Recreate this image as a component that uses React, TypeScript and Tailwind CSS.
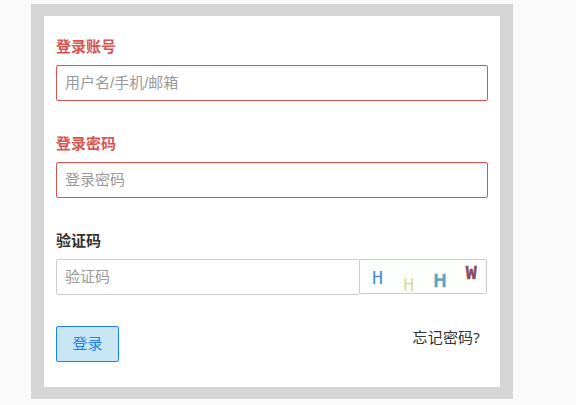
const fontStack = "font-['Noto_Sans','Noto_Sans_CJK_SC',sans-serif]";
const inputFont = "font-['Liberation_Sans','Noto_Sans_CJK_SC',sans-serif]";

interface FieldProps {
  id: string;
  label: string;
  placeholder: string;
  type?: string;
}

function ErrorField({ id, label, placeholder, type = 'text' }: FieldProps) {
  return (
    <div className="mb-[30px]">
      <label htmlFor={id} className="mb-[7px] block h-6 text-[15px] leading-6 font-bold text-[#d9534f]">
        {label}
      </label>
      <input
        id={id}
        type={type}
        placeholder={placeholder}
        className={`block h-9 w-full rounded-xs border border-[#d9534f] bg-white px-2 pb-px text-[15px] shadow-[inset_0_1px_1px_rgba(0,0,0,0.05)] outline-none placeholder:text-[#999] ${inputFont}`}
      />
    </div>
  );
}

function Captcha() {
  return (
    <div className="-ml-px h-[35px] w-32 rounded-xs border border-[#ccc] bg-[#fcfefc]">
      <svg width="126" height="33" viewBox="360 260 126 33" fontFamily="'DejaVu Sans Mono', monospace">
        <text x="372" y="284" fontSize="17.5" textLength="11" lengthAdjust="spacingAndGlyphs" fill="#4590d8">H</text>
        <text x="403.3" y="290.5" fontSize="17.5" textLength="11" lengthAdjust="spacingAndGlyphs" fill="#cfe09c">H</text>
        <text x="433.5" y="286.7" fontSize="17.5" stroke="#58a5c0" strokeWidth="0.6" textLength="13" lengthAdjust="spacingAndGlyphs" fill="#58a5c0">H</text>
        <text x="465.8" y="279" fontSize="17" fontWeight="bold" stroke="#8a4a5c" strokeWidth="0.4" textLength="11" lengthAdjust="spacingAndGlyphs" fill="#8a4a5c">W</text>
      </svg>
    </div>
  );
}

export default function App() {
  return (
    <div className={`h-[405px] w-[576px] bg-[#fafafa] pt-1 pl-[31px] ${fontStack}`}>
      <div className="h-[395px] w-[482px] border-x-[13px] border-y-12 border-[#d5d5d5] bg-white px-3 pt-[18px]">
        <form>
          <ErrorField id="account" label="登录账号" placeholder="用户名/手机/邮箱" />
          <ErrorField id="password" label="登录密码" placeholder="登录密码" />

          {/* Verification code */}
          <label htmlFor="code" className="mb-[7px] block h-6 text-[15px] leading-6 font-bold text-[#333]">
            验证码
          </label>
          <div className="flex items-start">
            <input
              id="code"
              type="text"
              placeholder="验证码"
              className={`block h-9 w-[304px] rounded-xs border border-[#ccc] bg-white px-2 pb-px text-[15px] outline-none placeholder:text-[#999] ${inputFont}`}
            />
            <Captcha />
          </div>

          {/* Actions */}
          <div className="mt-[31px] flex items-start justify-between pr-2">
            <button
              type="button"
              className="h-9 w-[63px] rounded-xs border border-[#1a83f0] bg-[#c9e6f4] pb-0.5 text-[15px] text-[#2080f0]"
            >
              登录
            </button>
            <a href="#" className="-mt-px text-[15px] leading-6 tracking-[0.2px] text-[#333]">忘记密码?</a>
          </div>
        </form>
      </div>
    </div>
  );
}
